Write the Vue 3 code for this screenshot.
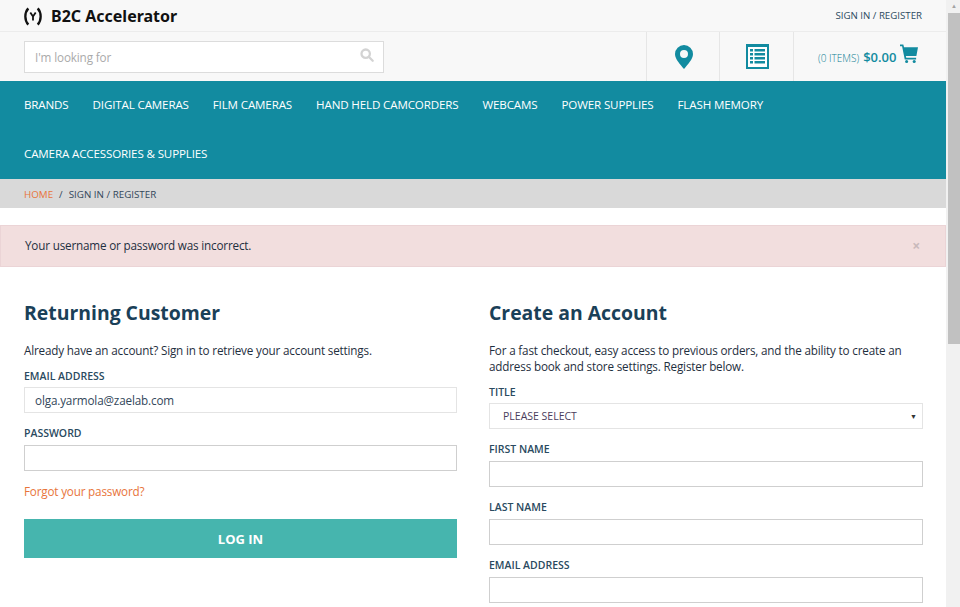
<template>
  <div class="page">
    <div class="main">
      <div class="top-bar">
        <div class="logo">
          <svg class="logo-mark" viewBox="0 0 20 20" fill="none" stroke="#111" stroke-width="2.600">
            <path d="M4.800 1C2 4 1.500 7 1.500 10s.5 6 3.300 9"/>
            <path d="M15.200 1C18 4 18.500 7 18.500 10s-.5 6-3.300 9"/>
            <path d="M7 5.500L10 10L13 5.500M10 10V14.500" stroke-width="2"/>
          </svg>
          <span class="logo-text">B2C Accelerator</span>
        </div>
        <a class="sign-in">SIGN IN / REGISTER</a>
      </div>

      <div class="tools">
        <div class="search-wrap">
          <div class="search">
            <span class="search-text">I'm looking for</span>
            <svg class="search-icon" viewBox="0 0 16 16" fill="none" stroke="#d3d3d3" stroke-width="2.600">
              <circle cx="6.500" cy="6.500" r="4.800"/>
              <path d="M10 10l4.500 4.500" stroke-linecap="round"/>
            </svg>
          </div>
        </div>
        <div class="tool">
          <svg class="pin" viewBox="0 0 18 24">
            <path fill-rule="evenodd" fill="#128ba0" d="M9 0a9 9 0 0 1 9 9c0 5-5 10-9 15C5 19 0 14 0 9a9 9 0 0 1 9-9zm0 5a4 4 0 1 0 0 8a4 4 0 0 0 0-8z"/>
          </svg>
        </div>
        <div class="tool tool-list">
          <svg class="list-icon" viewBox="0 0 23 25">
            <rect width="23" height="25" fill="#128ba0"/>
            <rect x="2" y="3" width="19" height="20" fill="#fff"/>
            <g fill="#128ba0">
              <rect x="4" y="5" width="3" height="2.500"/><rect x="8.500" y="5" width="10.500" height="2.500"/>
              <rect x="4" y="9" width="3" height="2.500"/><rect x="8.500" y="9" width="10.500" height="2.500"/>
              <rect x="4" y="13" width="3" height="2.500"/><rect x="8.500" y="13" width="10.500" height="2.500"/>
              <rect x="4" y="17" width="3" height="2.500"/><rect x="8.500" y="17" width="10.500" height="2.500"/>
            </g>
          </svg>
        </div>
        <div class="cart">
          <span class="cart-items">(0 ITEMS)</span>
          <span class="cart-total">$0.00</span>
          <svg class="cart-icon" viewBox="0 0 19 20">
            <path fill="#128ba0" d="M0 0h3.500l.8 3H19l-1.700 9H6.200l.4 2H17v1.800H5L2.200 1.800H0z"/>
            <circle cx="7" cy="18" r="1.600" fill="#128ba0"/>
            <circle cx="15" cy="18" r="1.600" fill="#128ba0"/>
          </svg>
        </div>
      </div>

      <nav class="nav">
        <a v-for="item in navItems" :key="item" class="nav-link">{{ item }}</a>
      </nav>

      <div class="crumbs">
        <span class="crumb-home">HOME</span>
        <span class="crumb-sep">/</span>
        <span>SIGN IN / REGISTER</span>
      </div>

      <div class="alert">
        <span>Your username or password was incorrect.</span>
        <span class="alert-close">×</span>
      </div>

      <div class="columns">
        <section>
          <h2>Returning Customer</h2>
          <p class="intro">Already have an account? Sign in to retrieve your account settings.</p>
          <label class="field-label">EMAIL ADDRESS</label>
          <div class="input input-filled">olga.yarmola@zaelab.com</div>
          <label class="field-label">PASSWORD</label>
          <div class="input"></div>
          <a class="forgot">Forgot your password?</a>
          <button class="login">LOG IN</button>
        </section>

        <section>
          <h2>Create an Account</h2>
          <p class="intro">For a fast checkout, easy access to previous orders, and the ability to create an address book and store settings. Register below.</p>
          <label class="field-label">TITLE</label>
          <div class="select">
            <span>PLEASE SELECT</span>
            <span class="caret">▼</span>
          </div>
          <template v-for="name in registerFields" :key="name">
            <label class="field-label">{{ name }}</label>
            <div class="input"></div>
          </template>
        </section>
      </div>
    </div>

    <div class="scrollbar">
      <div class="arrow">▲</div>
      <div class="thumb"></div>
    </div>
  </div>
</template>

<script setup>
const navItems = [
  'BRANDS',
  'DIGITAL CAMERAS',
  'FILM CAMERAS',
  'HAND HELD CAMCORDERS',
  'WEBCAMS',
  'POWER SUPPLIES',
  'FLASH MEMORY',
  'CAMERA ACCESSORIES & SUPPLIES'
];

const registerFields = ['FIRST NAME', 'LAST NAME', 'EMAIL ADDRESS'];
</script>

<style>
html, body {
  margin: 0;
  overflow: hidden;
}
</style>

<style scoped>
.page {
  display: flex;
  width: 960px;
  height: 607px;
  overflow: hidden;
  background: #fff;
  font-family: "Open Sans", sans-serif;
  color: #1a3c50;
}

.main {
  width: 946px;
  flex-shrink: 0;
}

.top-bar {
  height: 31px;
  padding: 0 24px;
  display: flex;
  justify-content: space-between;
  align-items: center;
  background: #f8f8f8;
  border-bottom: 1px solid #ececec;
}

.logo {
  display: flex;
  align-items: center;
  gap: 9px;
}

.logo-mark {
  width: 18px;
  height: 19px;
  margin-top: 1px;
}

.logo-text {
  font-family: "Noto Sans", sans-serif;
  font-size: 16px;
  font-weight: 700;
  color: #111;
}

.sign-in {
  font-size: 9.700px;
  color: #2b4a60;
}

.tools {
  height: 49px;
  display: flex;
  background: #f8f8f8;
}

.search-wrap {
  flex: 1;
  padding: 9px 24px 0;
}

.search {
  width: 360px;
  height: 32px;
  box-sizing: border-box;
  padding: 0 9px 0 10px;
  display: flex;
  align-items: center;
  justify-content: space-between;
  background: #fff;
  border: 1px solid #dcdcdc;
}

.search-text {
  margin-top: -1px;
  font-size: 11.700px;
  letter-spacing: -0.13px;
  color: #aaa;
}

.search-icon {
  width: 14px;
  height: 14px;
  margin-top: -4px;
}

.tool {
  width: 72px;
  display: flex;
  align-items: center;
  justify-content: center;
  border-left: 1px solid #e6e6e6;
}

.tool-list {
  width: 73px;
}

.pin,
.list-icon {
  margin-left: 2px;
}

.pin {
  width: 18px;
  height: 24px;
}

.list-icon {
  width: 23px;
  height: 25px;
}

.cart {
  width: 153px;
  box-sizing: border-box;
  padding-left: 24px;
  display: flex;
  align-items: center;
  border-left: 1px solid #e6e6e6;
  color: #128ba0;
}

.cart-items {
  font-size: 10px;
  font-weight: 300;
  margin-top: 2px;
  color: #0f7f94;
}

.cart-total {
  font-size: 13px;
  font-weight: 600;
  margin-left: 4px;
}

.cart-icon {
  width: 18px;
  height: 20px;
  margin: -6px 0 0 4px;
}

.nav {
  height: 98px;
  box-sizing: border-box;
  padding: 0 24px;
  display: flex;
  flex-wrap: wrap;
  column-gap: 24px;
  row-gap: 1px;
  align-content: flex-start;
  background: #128ba0;
}

.nav-link {
  line-height: 48px;
  font-size: 11.600px;
  font-weight: 500;
  letter-spacing: -0.15px;
  color: #fff;
}

.crumbs {
  height: 29px;
  box-sizing: border-box;
  padding: 1px 24px 0;
  display: flex;
  align-items: center;
  font-size: 9.800px;
  color: #33475a;
  background: #d9d9d9;
}

.crumb-home {
  color: #e8743b;
}

.crumb-sep {
  margin: 0 6px;
}

.alert {
  height: 42px;
  box-sizing: border-box;
  margin-top: 17px;
  padding: 0 25px 2px 24px;
  display: flex;
  align-items: center;
  justify-content: space-between;
  font-size: 11.700px;
  letter-spacing: -0.175px;
  color: #1f2f40;
  background: #f2dede;
  border: 1px solid #ebd4d6;
}

.alert-close {
  font-size: 14px;
  font-weight: 700;
  color: #c9b9bb;
}

.columns {
  display: grid;
  grid-template-columns: 433px 434px;
  column-gap: 32px;
  padding: 0 23px 0 24px;
}

h2 {
  margin: 33px 0 0;
  font-size: 19.400px;
  line-height: 26px;
  font-weight: 700;
  color: #1a4058;
}

.intro {
  margin: 16px 0 0;
  font-size: 11.700px;
  letter-spacing: -0.175px;
  line-height: 16px;
  color: #1f2f40;
}

.field-label {
  display: block;
  margin-top: 9px;
  font-size: 10.500px;
  line-height: 14px;
  font-weight: 600;
  color: #2a4a60;
}

.intro + .field-label {
  margin-top: 11px;
  margin-bottom: -1px;
}

.input {
  height: 26px;
  box-sizing: border-box;
  margin: 5px 0 13px;
  padding: 0 10px;
  line-height: 24px;
  font-size: 11.700px;
  letter-spacing: -0.15px;
  color: #33475a;
  background: #fff;
  border: 1px solid #cfcfcf;
}

.input-filled {
  border-color: #e4e4e4;
}

.select {
  height: 26px;
  box-sizing: border-box;
  margin: 5px 0 13px;
  padding: 0 5px 0 13px;
  display: flex;
  align-items: center;
  justify-content: space-between;
  font-size: 10.500px;
  color: #4a3d5c;
  background: #fff;
  border: 1px solid #e4e4e4;
}

.caret {
  font-size: 7px;
  color: #333;
}

.forgot {
  display: block;
  margin-top: -1px;
  font-size: 11.700px;
  letter-spacing: -0.18px;
  line-height: 16px;
  color: #e8743b;
}

.login {
  display: block;
  width: 100%;
  height: 39px;
  margin-top: 20px;
  border: 0;
  font-family: "Open Sans", sans-serif;
  font-size: 13px;
  font-weight: 700;
  color: #fff;
  background: #46b5ae;
}

.scrollbar {
  width: 14px;
  background: #f1f1f1;
}

.arrow {
  height: 13px;
  line-height: 13px;
  padding-left: 2px;
  text-align: center;
  font-size: 6px;
  color: #a3a3a3;
}

.thumb {
  height: 331px;
  margin-left: 2px;
  background: #c1c1c1;
}
</style>
